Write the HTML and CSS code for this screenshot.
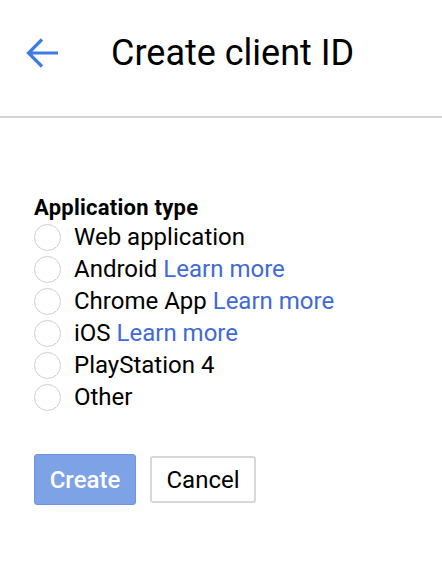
FILE: index.html
```html
<!DOCTYPE html>
<html>
<head>
<meta charset="utf-8">
<link rel="stylesheet" href="styles.css">
</head>
<body>
<header class="header">
  <span class="back">
    <svg width="34" height="34" viewBox="0 0 34 34"><path d="M33 17H3.5M17 3.5L3.5 17L17 30.5" fill="none" stroke="#3f7be6" stroke-width="3.2"/></svg>
  </span>
  <h1 class="title">Create client ID</h1>
</header>
<main class="content">
  <div class="label">Application type</div>
  <ul class="options">
    <li class="option"><span class="radio"></span><span>Web application</span></li>
    <li class="option"><span class="radio"></span><span>Android <a class="link">Learn more</a></span></li>
    <li class="option"><span class="radio"></span><span>Chrome App <a class="link">Learn more</a></span></li>
    <li class="option"><span class="radio"></span><span>iOS <a class="link">Learn more</a></span></li>
    <li class="option"><span class="radio"></span><span>PlayStation 4</span></li>
    <li class="option"><span class="radio"></span><span>Other</span></li>
  </ul>
  <div class="actions">
    <button class="btn btn-primary">Create</button>
    <button class="btn btn-secondary">Cancel</button>
  </div>
</main>
</body>
</html>
```
FILE: styles.css
```css
html, body {
  margin: 0;
  padding: 0;
  background: #fff;
  font-family: Roboto, "Liberation Sans", Arial, sans-serif;
  color: #000;
}
.header {
  border-bottom: 2px solid #d4d4d4;
  display: flex;
  align-items: center;
  padding-left: 25px;
  box-sizing: border-box;
  height: 118px;
  padding-bottom: 10px;
}
.back {
  display: flex;
  width: 34px;
  height: 34px;
}
.title {
  margin: 0 0 0 52px;
  font-size: 36px;
  font-weight: 400;
}
.content {
  padding: 78px 0 0 34px;
}
.label {
  font-size: 22px;
  font-weight: 700;
  letter-spacing: 0.25px;
  line-height: 24px;
  margin-bottom: 1px;
}
.options {
  list-style: none;
  margin: 0;
  padding: 0;
}
.option {
  display: flex;
  align-items: center;
  height: 32px;
  font-size: 24px;
}
.radio {
  width: 25px;
  height: 25px;
  border: 1.5px solid #cfcfcf;
  border-radius: 50%;
  margin-right: 13px;
  flex: none;
}
.link {
  color: #3f6ad8;
}
.actions {
  display: flex;
  align-items: center;
  gap: 14px;
  margin-top: 41px;
}
.btn {
  font-family: Roboto, "Liberation Sans", Arial, sans-serif;
  font-size: 24px;
  border-radius: 3px;
  cursor: pointer;
  padding: 0;
}
.btn-primary {
  width: 102px;
  height: 51px;
  background: #7ea2e6;
  border: 1px solid #6f95e0;
  color: #fff;
  font-weight: 500;
}
.btn-secondary {
  width: 106px;
  height: 47px;
  background: #fff;
  border: 2px solid #d8d8d8;
  color: #000;
}
```
